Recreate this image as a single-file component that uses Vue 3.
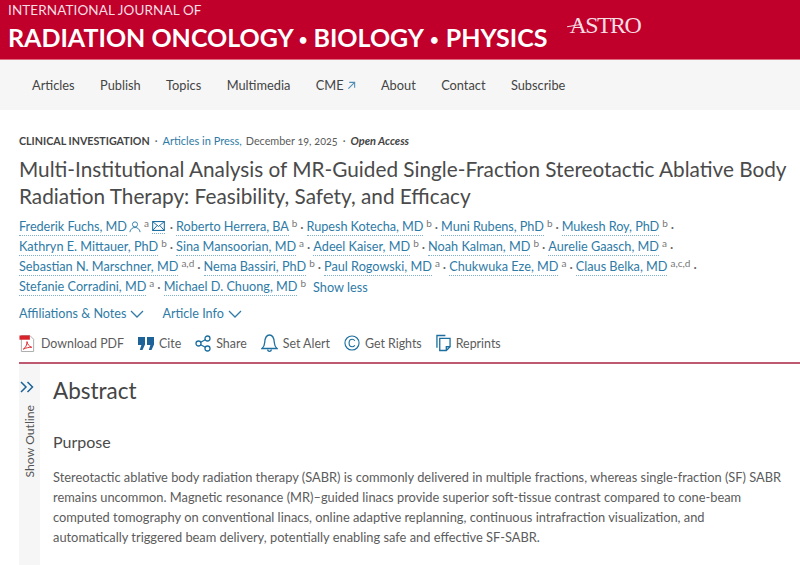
<script setup>
const navItems = ["Articles", "Publish", "Topics", "Multimedia", "CME", "About", "Contact", "Subscribe"];

const authorRows = [
  [
    { name: "Frederik Fuchs, MD", sup: "a", corresponding: true },
    { name: "Roberto Herrera, BA", sup: "b" },
    { name: "Rupesh Kotecha, MD", sup: "b" },
    { name: "Muni Rubens, PhD", sup: "b" },
    { name: "Mukesh Roy, PhD", sup: "b", trail: true },
  ],
  [
    { name: "Kathryn E. Mittauer, PhD", sup: "b" },
    { name: "Sina Mansoorian, MD", sup: "a" },
    { name: "Adeel Kaiser, MD", sup: "b" },
    { name: "Noah Kalman, MD", sup: "b" },
    { name: "Aurelie Gaasch, MD", sup: "a", trail: true },
  ],
  [
    { name: "Sebastian N. Marschner, MD", sup: "a,d" },
    { name: "Nema Bassiri, PhD", sup: "b" },
    { name: "Paul Rogowski, MD", sup: "a" },
    { name: "Chukwuka Eze, MD", sup: "a" },
    { name: "Claus Belka, MD", sup: "a,c,d", trail: true },
  ],
  [
    { name: "Stefanie Corradini, MD", sup: "a" },
    { name: "Michael D. Chuong, MD", sup: "b" },
  ],
];
</script>

<template>
  <div class="page">
    <header class="banner">
      <div class="journal">
        <div class="journal-top">INTERNATIONAL JOURNAL OF</div>
        <div class="journal-main">RADIATION ONCOLOGY <span class="bullet">•</span> BIOLOGY <span class="bullet second">•</span> PHYSICS</div>
      </div>
      <div class="astro">ASTRO</div>
    </header>

    <nav class="nav">
      <a v-for="item in navItems" :key="item" class="nav-item">
        {{ item }}
        <svg v-if="item === 'CME'" class="ext" viewBox="0 0 10 10" width="9" height="9">
          <path d="M1.500 8.500 8.500 1.500M2.500 1.500h6v6" fill="none" stroke="#4f8db5" stroke-width="1.200" />
        </svg>
      </a>
    </nav>

    <main class="article">
      <div class="meta">
        <span class="kind">CLINICAL INVESTIGATION</span>
        <span class="dot">·</span>
        <span class="press">Articles in Press,</span>
        <span class="date">December 19, 2025</span>
        <span class="dot">·</span>
        <em class="open">Open Access</em>
      </div>

      <h1 class="title">
        Multi-Institutional Analysis of MR-Guided Single-Fraction Stereotactic Ablative Body<br />
        Radiation Therapy: Feasibility, Safety, and Efficacy
      </h1>

      <div class="authors">
        <div v-for="(row, i) in authorRows" :key="i" class="author-row" :class="{ tight: i === 0 }">
          <template v-for="(a, j) in row" :key="a.name">
            <span class="author">{{ a.name }}</span>
            <svg v-if="a.corresponding" class="person" viewBox="0 0 14 14" width="12" height="12">
              <circle cx="7" cy="4" r="3" fill="none" stroke="#2f7ba6" stroke-width="1.100" />
              <path d="M1 13c.6-3.600 3-5.400 6-5.400s5.400 1.800 6 5.400" fill="none" stroke="#2f7ba6" stroke-width="1.100" />
            </svg>
            <sup class="sup">{{ a.sup }}</sup>
            <span v-if="a.corresponding" class="mail">
              <svg viewBox="0 0 14 11" width="13" height="10">
                <rect x="0.600" y="0.600" width="12.800" height="9.800" fill="none" stroke="#1d6f9f" stroke-width="1.200" />
                <path d="M1 1l6 5 6-5M1 10l4.500-5M13 10 8.500 5" fill="none" stroke="#1d6f9f" stroke-width="1.100" />
              </svg>
            </span>
            <span v-if="j < row.length - 1 || a.trail" class="sep">·</span>
          </template>
          <a v-if="i === authorRows.length - 1" class="show-less">Show less</a>
        </div>
      </div>

      <div class="toggles">
        <a class="toggle">
          Affiliations &amp; Notes
          <svg viewBox="0 0 14 8" width="14" height="8"><path d="M1 1l6 6 6-6" fill="none" stroke="#2f7ba6" stroke-width="1.300" /></svg>
        </a>
        <a class="toggle">
          Article Info
          <svg viewBox="0 0 14 8" width="14" height="8"><path d="M1 1l6 6 6-6" fill="none" stroke="#2f7ba6" stroke-width="1.300" /></svg>
        </a>
      </div>

      <div class="actions">
        <a class="action">
          <svg viewBox="0 0 18 20" width="17" height="19">
            <path d="M2.500 1.500h9l4 4v13h-13z" fill="#fff" stroke="#a9a9a9" stroke-width="1" />
            <rect x="0.500" y="1.500" width="11" height="4.500" fill="#d8232a" />
            <path d="M4.500 16c2.500-1.500 4-4.500 4-8 .5 3 2 5 5 6-3 0-6 .5-9 2z" fill="none" stroke="#d8232a" stroke-width="1" />
          </svg>
          Download PDF
        </a>
        <a class="action">
          <svg viewBox="0 0 16 13" width="16" height="13">
            <path d="M0 0h7v7.500L4.500 13H1.800l1.600-5H0zM9 0h7v7.500L13.500 13h-2.700l1.600-5H9z" fill="#1d6397" />
          </svg>
          Cite
        </a>
        <a class="action">
          <svg viewBox="0 0 16 17" width="16" height="17" fill="none" stroke="#1d6f9f" stroke-width="1.300">
            <circle cx="3.500" cy="8.500" r="2.500" />
            <circle cx="12.500" cy="3.500" r="2.500" />
            <circle cx="12.500" cy="13.500" r="2.500" />
            <path d="M5.700 7.300 10.300 4.700M5.700 9.700l4.600 2.600" />
          </svg>
          Share
        </a>
        <a class="action">
          <svg viewBox="0 0 17 18" width="17" height="18" fill="none" stroke="#1d6f9f" stroke-width="1.300">
            <path d="M1 14.500c2-1.500 2.500-3 2.700-6C4 4 5.800 1 8.500 1s4.500 3 4.800 7.500c.2 3 .7 4.500 2.700 6z" />
            <path d="M6.500 15.500c.3 1.300 1 1.800 2 1.800s1.700-.5 2-1.800" />
          </svg>
          Set Alert
        </a>
        <a class="action">
          <svg viewBox="0 0 17 17" width="16" height="16" fill="none" stroke="#1d6f9f" stroke-width="1.200">
            <circle cx="8.500" cy="8.500" r="7.500" />
            <path d="M11.500 6.200C10.800 5 9.800 4.500 8.700 4.500c-2 0-3.300 1.700-3.300 4s1.300 4 3.300 4c1.100 0 2.100-.5 2.800-1.700" />
          </svg>
          Get Rights
        </a>
        <a class="action">
          <svg viewBox="0 0 16 18" width="15" height="18" fill="none" stroke="#1d6f9f" stroke-width="1.400">
            <path d="M1 14V1h9" />
            <path d="M4 4h11v9l-4 4H4z" />
            <path d="M11 17v-4h4" />
          </svg>
          Reprints
        </a>
      </div>

      <div class="body-wrap">
        <aside class="outline">
          <svg class="outline-icon" viewBox="0 0 14 12" width="14" height="12" fill="none" stroke="#1d6397" stroke-width="1.500">
            <path d="M1 1l5 5-5 5M7.500 1l5 5-5 5" />
          </svg>
          <span class="outline-label">Show Outline</span>
        </aside>
        <section class="abstract">
          <h2 class="abstract-title">Abstract</h2>
          <h3 class="purpose">Purpose</h3>
          <p class="text">
            Stereotactic ablative body radiation therapy (SABR) is commonly delivered in multiple fractions, whereas single-fraction (SF) SABR<br />
            remains uncommon. Magnetic resonance (MR)–guided linacs provide superior soft-tissue contrast compared to cone-beam<br />
            computed tomography on conventional linacs, online adaptive replanning, continuous intrafraction visualization, and<br />
            automatically triggered beam delivery, potentially enabling safe and effective SF-SABR.
          </p>
        </section>
      </div>
    </main>
  </div>
</template>

<style>
html,
body {
  margin: 0;
  background: #fff;
}
</style>

<style scoped>
.page {
  width: 800px;
  height: 565px;
  overflow: hidden;
  font-family: "Lato", "Noto Sans", sans-serif;
  color: #505050;
}

.banner {
  height: 60px;
  box-sizing: border-box;
  background: #c0002b;
  border-bottom: 1px solid #e06a80;
  color: #fff;
  display: flex;
  padding-left: 8px;
}

.journal-top {
  font-size: 13.500px;
  line-height: 16px;
  padding-top: 2px;
  letter-spacing: 0.100px;
  color: #f6dde2;
}

.journal-main {
  font-size: 25px;
  font-weight: 700;
  line-height: 30px;
  margin-top: 4px;
  white-space: nowrap;
}

.bullet {
  font-size: 15px;
  vertical-align: 2px;
}

.bullet.second {
  margin: 0 1px;
}

.astro {
  position: relative;
  font-family: "Liberation Serif", serif;
  font-size: 24px;
  line-height: 24px;
  color: #f6dde2;
  margin-left: 19px;
  padding-top: 13px;
  padding-left: 3px;
  letter-spacing: -1.600px;
}

/* swoosh through the A */
.astro::before {
  content: "";
  position: absolute;
  left: 0;
  top: 25px;
  width: 15px;
  height: 1px;
  background: #f6dde2;
  transform: rotate(-10deg);
}

.nav {
  height: 50px;
  background: #f6f6f6;
  display: flex;
  align-items: center;
  padding-left: 32px;
  gap: 25.400px;
  font-size: 12.800px;
  color: #444;
  box-sizing: border-box;
}

.nav-item {
  display: inline-flex;
  align-items: center;
  gap: 3px;
}

.article {
  padding: 0 0 0 19px;
}

.meta {
  display: flex;
  align-items: center;
  gap: 4px;
  padding-top: 23px;
  height: 15px;
  font-size: 11px;
  color: #5c5c5c;
  white-space: nowrap;
}

.kind {
  font-size: 10.700px;
  font-weight: 700;
  color: #444;
}

.dot {
  margin: 0 1px;
}

.press {
  color: #2f7ba6;
}

.date {
  font-size: 10.800px;
  font-variant-numeric: oldstyle-nums;
}

.open {
  font-weight: 700;
  color: #444;
}

.title {
  margin: 8px 0 0;
  font-size: 20.750px;
  font-weight: 400;
  line-height: 27px;
  color: #4a4a4a;
  white-space: nowrap;
}

.authors {
  margin-top: 7px;
}

.author-row {
  height: 20px;
  display: flex;
  align-items: center;
  font-size: 12.700px;
  white-space: nowrap;
}

.author-row.tight {
  letter-spacing: -0.050px;
}

.author {
  color: #2f7ba6;
  border-bottom: 1px dotted #7fb0cc;
  line-height: 17px;
}

.person {
  margin-left: 2px;
}

.sup {
  font-size: 10px;
  color: #777;
  margin-left: 3px;
  line-height: 10px;
  align-self: flex-start;
  margin-top: 1px;
}

.mail {
  display: inline-flex;
  margin-left: 3px;
  margin-right: 2px;
  border-bottom: 1px dotted #7fb0cc;
  padding-bottom: 2px;
}

.sep {
  margin: 0 3px;
  color: #666;
}

.show-less {
  color: #2f7ba6;
  margin-left: 7px;
}

.toggles {
  display: flex;
  gap: 18px;
  margin-top: 9px;
  font-size: 12.600px;
  color: #2f7ba6;
}

.toggle {
  display: inline-flex;
  align-items: center;
  gap: 4px;
}

.actions {
  display: flex;
  align-items: center;
  gap: 14px;
  height: 26px;
  margin-top: 9px;
  font-size: 12.400px;
  color: #5c5c5c;
  padding-bottom: 6px;
  border-bottom: 2px solid #bd5a72;
}

.action {
  display: inline-flex;
  align-items: center;
  gap: 5px;
}

.body-wrap {
  display: flex;
}

.outline {
  width: 21px;
  height: 205px;
  background: #f6f6f6;
  display: flex;
  flex-direction: column;
  align-items: center;
  padding-top: 17px;
  gap: 12px;
}

.outline-icon {
  margin-left: -6px;
}

.outline-label {
  writing-mode: vertical-rl;
  transform: rotate(180deg);
  font-size: 12.200px;
  color: #555;
}

.abstract {
  padding-left: 13px;
}

.abstract-title {
  margin: 13px 0 0;
  font-size: 22.500px;
  font-weight: 400;
  line-height: 28px;
  color: #444;
}

.purpose {
  margin: 27px 0 0;
  font-size: 16px;
  font-weight: 400;
  line-height: 20px;
  color: #4a4a4a;
}

.text {
  margin: 15px 0 0;
  font-size: 12.850px;
  line-height: 20px;
  color: #5c5c5c;
  white-space: nowrap;
}
</style>
